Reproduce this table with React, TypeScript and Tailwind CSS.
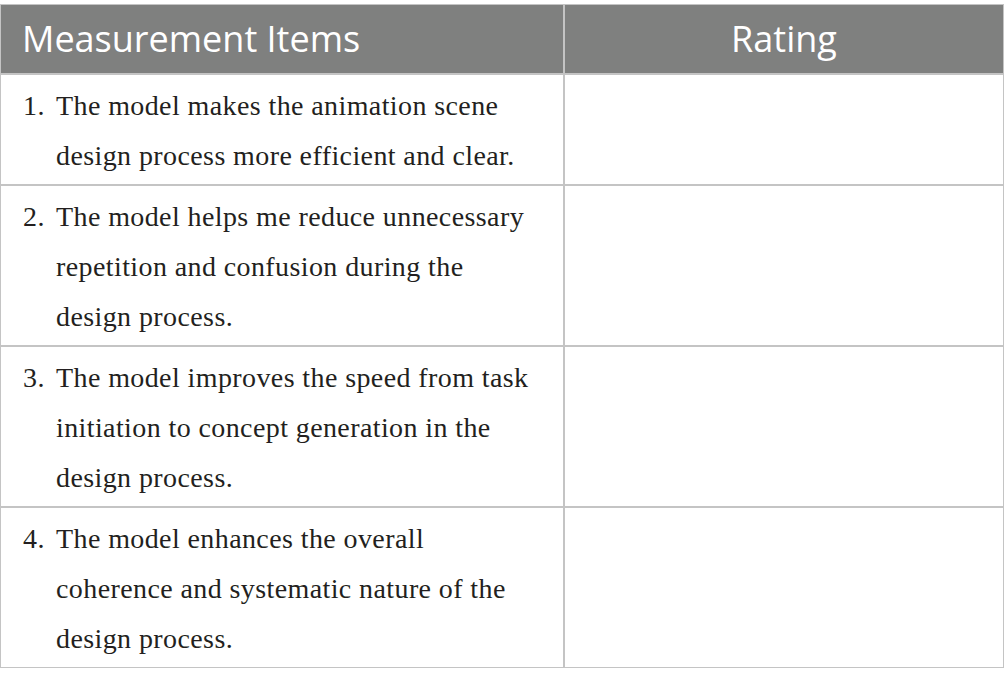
const rows = [
  {
    n: "1.",
    lines: ["The model makes the animation scene", "design process more efficient and clear."],
  },
  {
    n: "2.",
    lines: [
      "The model helps me reduce unnecessary",
      "repetition and confusion during the",
      "design process.",
    ],
  },
  {
    n: "3.",
    lines: [
      "The model improves the speed from task",
      "initiation to concept generation in the",
      "design process.",
    ],
  },
  {
    n: "4.",
    lines: [
      "The model enhances the overall",
      "coherence and systematic nature of the",
      "design process.",
    ],
  },
];

export default function App() {
  return (
    <div className="min-h-[687px] bg-white pt-[4px]">
      <div className="w-[1004px] border border-[#c4c4c4]">
        <div className="grid grid-cols-[564px_1fr] bg-[#7f807f] text-white font-['Open_Sans',sans-serif] text-[36px] h-[68px]">
          <div className="flex items-center pl-[21px] border-r-2 border-[#c4c4c4] leading-none">
            Measurement Items
          </div>
          <div className="flex items-center justify-center leading-none">Rating</div>
        </div>
        {rows.map((row) => (
          <div
            key={row.n}
            className="grid grid-cols-[564px_1fr] border-t-2 border-[#c4c4c4] font-['Liberation_Serif',serif] text-[28px] tracking-[0.4px] text-[#231f20]"
          >
            <div className="flex pl-[22px] pt-[6px] pb-[3px] leading-[50px] border-r-2 border-[#c4c4c4]">
              <span className="w-[33px] shrink-0">{row.n}</span>
              <div>
                {row.lines.map((l) => (
                  <div key={l} className="whitespace-nowrap">
                    {l}
                  </div>
                ))}
              </div>
            </div>
            <div />
          </div>
        ))}
      </div>
    </div>
  );
}
